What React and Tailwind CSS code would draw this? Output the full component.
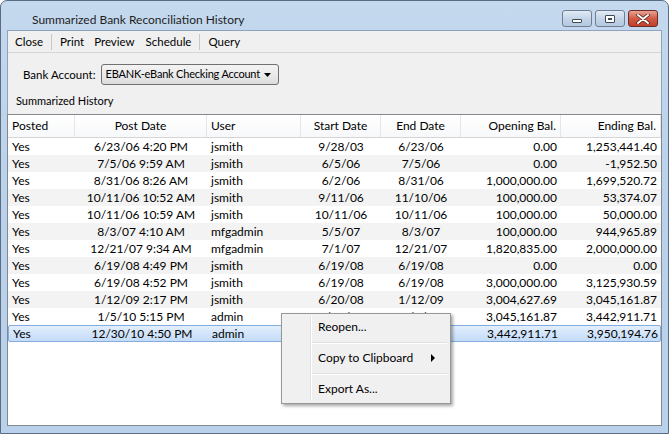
import React from 'react';

const rows = [
  ['Yes', '6/23/06 4:20 PM', 'jsmith', '9/28/03', '6/23/06', '0.00', '1,253,441.40'],
  ['Yes', '7/5/06 9:59 AM', 'jsmith', '6/5/06', '7/5/06', '0.00', '-1,952.50'],
  ['Yes', '8/31/06 8:26 AM', 'jsmith', '6/2/06', '8/31/06', '1,000,000.00', '1,699,520.72'],
  ['Yes', '10/11/06 10:52 AM', 'jsmith', '9/11/06', '11/10/06', '100,000.00', '53,374.07'],
  ['Yes', '10/11/06 10:59 AM', 'jsmith', '10/11/06', '10/11/06', '100,000.00', '50,000.00'],
  ['Yes', '8/3/07 4:10 AM', 'mfgadmin', '5/5/07', '8/3/07', '100,000.00', '944,965.89'],
  ['Yes', '12/21/07 9:34 AM', 'mfgadmin', '7/1/07', '12/21/07', '1,820,835.00', '2,000,000.00'],
  ['Yes', '6/19/08 4:49 PM', 'jsmith', '6/19/08', '6/19/08', '0.00', '0.00'],
  ['Yes', '6/19/08 4:52 PM', 'jsmith', '6/19/08', '6/19/08', '3,000,000.00', '3,125,930.59'],
  ['Yes', '1/12/09 2:17 PM', 'jsmith', '6/20/08', '1/12/09', '3,004,627.69', '3,045,161.87'],
  ['Yes', '1/5/10 5:15 PM', 'admin', '1/13/09', '1/5/10', '3,045,161.87', '3,442,911.71'],
  ['Yes', '12/30/10 4:50 PM', 'admin', '1/6/10', '12/30/10', '3,442,911.71', '3,950,194.76'],
];

// widths + alignment per column
const cols = [
  { w: 'w-[67px]', align: 'text-left pl-[4px]' },
  { w: 'w-[132px]', align: 'text-center' },
  { w: 'w-[94px]', align: 'text-left pl-[4px]' },
  { w: 'w-[80px]', align: 'text-center' },
  { w: 'w-[80px]', align: 'text-center' },
  { w: 'w-[100px]', align: 'text-right pr-[4px]' },
  { w: 'w-[100px]', align: 'text-right pr-[4px]' },
];

const headers = ['Posted', 'Post Date', 'User', 'Start Date', 'End Date', 'Opening Bal.', 'Ending Bal.'];

const CaptionButton = ({ children, close }) => (
  <div
    className={
      close
        ? 'w-[30px] h-[17px] rounded-[3px] border border-[#6d2a22] bg-gradient-to-b from-[#e8a493] via-[#cf5a45] to-[#c2402c] flex items-center justify-center'
        : 'w-[30px] h-[17px] rounded-[3px] border border-[#6e7f95] bg-gradient-to-b from-[#e3ebf5] via-[#c5d5e8] to-[#b4c8e0] flex items-center justify-center'
    }
  >
    {children}
  </div>
);

const App = () => {
  return (
    <div
      className="w-[669px] h-[434px] overflow-hidden relative bg-gradient-to-b from-[#c4d8ee] via-[#b9d1ea] to-[#b9d1ea] border border-[#5c6c80] rounded-t-[7px] flex flex-col text-[12px] text-black"
      style={{ fontFamily: 'Lato, "Noto Sans", sans-serif' }}
    >
      {/* title bar */}
      <div className="h-[29px] flex items-start shrink-0">
        <div className="pl-[31px] pt-[10px] text-[12px] leading-[18px] text-[#1e1e1e]">Summarized Bank Reconciliation History</div>
        <div className="ml-auto flex gap-[3px] pt-[9px] pr-[10px]">
          <CaptionButton>
            <div className="w-[10px] h-[4px] mt-[5px] bg-white border border-[#404a56] rounded-[1px]" />
          </CaptionButton>
          <CaptionButton>
            <div className="w-[10px] h-[8px] bg-white border border-[#404a56] rounded-[1px] flex items-center justify-center">
              <div className="w-[4px] h-[2px] bg-[#404a56]" />
            </div>
          </CaptionButton>
          <CaptionButton close>
            <svg width="14" height="10" viewBox="0 0 14 10">
              <path d="M2 1 L12 9 M12 1 L2 9" stroke="#4a1a12" strokeWidth="3.4" strokeLinecap="round" />
              <path d="M2 1 L12 9 M12 1 L2 9" stroke="#ffffff" strokeWidth="2" strokeLinecap="round" />
            </svg>
          </CaptionButton>
        </div>
      </div>

      {/* client area */}
      <div className="flex-1 mx-[6px] border-x border-t border-[#8ea4bd] bg-[#f0f0f0] flex flex-col min-h-0">
        {/* toolbar */}
        <div className="h-[22px] shrink-0 flex items-center border-b border-[#d5d5d5] pl-[7px] text-[11.5px]">
          <span>Close</span>
          <span className="mx-[8px] w-px h-[16px] bg-[#c9c9c9]" />
          <span>Print</span>
          <span className="ml-[10px]">Preview</span>
          <span className="ml-[11px]">Schedule</span>
          <span className="mx-[8px] w-px h-[16px] bg-[#c9c9c9]" />
          <span>Query</span>
        </div>

        {/* bank account */}
        <div className="flex items-center pl-[15px] pt-[10px] h-[33px] shrink-0 text-[11.5px]">
          <span>Bank Account:</span>
          <div className="ml-[5px] w-[178px] h-[21px] rounded-[3px] border border-[#707070] bg-gradient-to-b from-[#f3f3f3] via-[#ebebeb] to-[#dcdcdc] flex items-center pl-[4px] pr-[7px]">
            <span className="flex-1 whitespace-nowrap text-[11px] tracking-[-0.2px]">EBANK-eBank Checking Account</span>
            <svg width="7" height="4" viewBox="0 0 7 4" className="shrink-0">
              <path d="M0 0 L7 0 L3.5 4 Z" fill="#000" />
            </svg>
          </div>
        </div>

        <div className="pl-[8px] pt-[8px] h-[28px] shrink-0 leading-[14px] text-[11px]">Summarized History</div>

        {/* table */}
        <div className="flex-1 border border-[#828790] bg-white min-h-0 -mx-px">
          <div className="flex h-[23px] border-b border-[#d5d5d5] bg-gradient-to-b from-white to-[#f7f8fa]">
            {headers.map((h, i) => (
              <div
                key={h}
                className={`${cols[i].w} ${cols[i].align} shrink-0 border-r border-[#e5e5e5] leading-[22px] whitespace-nowrap`}
              >
                {h}
              </div>
            ))}
          </div>
          {rows.map((r, ri) => {
            const selected = ri === rows.length - 1;
            return (
              <div
                key={ri}
                className={
                  selected
                    ? 'flex h-[17px] leading-[15px] border border-[#84acdd] rounded-[2px] bg-gradient-to-b from-[#e2eefc] to-[#c4dcf9]'
                    : ri % 2 === 0
                    ? 'flex h-[17px] leading-[17px] bg-white'
                    : 'flex h-[17px] leading-[17px] bg-[#f3f3f3]'
                }
              >
                {r.map((c, ci) => (
                  <div
                    key={ci}
                    className={`${cols[ci].w} ${cols[ci].align} shrink-0 whitespace-nowrap ${selected && ci === 0 ? 'pl-[3px]' : ''}`}
                  >
                    {c}
                  </div>
                ))}
              </div>
            );
          })}
        </div>
      </div>
      <div className="h-[7px] shrink-0" />

      {/* context menu */}
      <div className="absolute left-[280px] top-[312px] w-[170px] h-[91px] bg-[#f0f0f0] border border-[#979797] shadow-[2px_2px_3px_rgba(0,0,0,0.35)] py-[2px] flex">
        <div className="w-[29px] shrink-0 border-r border-[#e2e3e3]" />
        <div className="w-px bg-white shrink-0" />
        <div className="flex-1 flex flex-col pr-[3px]">
          <div className="h-[22px] leading-[22px] pl-[6px]">Reopen...</div>
          <div className="h-[9px] flex items-center">
            <div className="w-full h-px bg-[#e0e0e0] border-b border-white box-content" />
          </div>
          <div className="h-[22px] leading-[22px] pl-[6px] flex items-center">
            <span className="flex-1">Copy to Clipboard</span>
            <svg width="4" height="8" viewBox="0 0 4 8" className="mr-[12px]">
              <path d="M0 0 L4 4 L0 8 Z" fill="#000" />
            </svg>
          </div>
          <div className="h-[9px] flex items-center">
            <div className="w-full h-px bg-[#e0e0e0] border-b border-white box-content" />
          </div>
          <div className="h-[22px] leading-[22px] pl-[6px]">Export As...</div>
        </div>
      </div>
    </div>
  );
};

export default App;
